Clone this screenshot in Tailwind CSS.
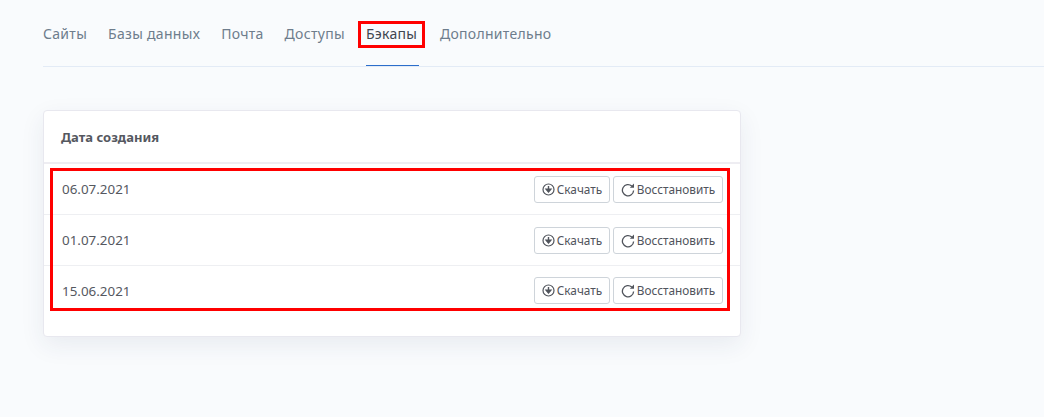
<!doctype html>
<html lang="ru"><head><meta charset="utf-8"><script src="https://cdn.jsdelivr.net/npm/@tailwindcss/browser@4"></script></head>
<body class="bg-[#f9fbfd] font-['Noto_Sans',sans-serif]">
<div class="relative h-[417px] w-[1044px] overflow-hidden pl-[43px]">
  <nav class="flex h-[67px] gap-[21px] border-b border-[#e3ebf6] pt-[23px] text-[14px] leading-[21px] tracking-[0.3px] text-[#6e7d8c]">
    <a>Сайты</a><a>Базы данных</a><a>Почта</a><a>Доступы</a>
    <a class="h-[43px] w-[53px] border-b border-[#2c6ecb] text-[#3f4650]">Бэкапы</a>
    <a>Дополнительно</a>
  </nav>
  <section class="mt-[43px] h-[227px] w-[698px] rounded-[4px] border border-[#e8e8ef] bg-white shadow-[0_8px_24px_rgba(40,50,90,0.08)]">
    <h2 class="flex h-[53px] items-center border-b-2 border-[#eeedf2] pl-[17px] pt-[2px] text-[13px] font-bold text-[#55585f]">Дата создания</h2>
    <div class="flex h-[51px] items-center justify-between border-b border-[#eeeff2] pr-[17px] pl-[18px] pt-[1px] text-[13.4px] text-[#55585f]">
      <span>06.07.2021</span>
      <div class="flex gap-[3px] text-[11.8px] text-[#50545c]">
        <button class="flex h-[27px] w-[76px] items-center justify-center gap-[2px] rounded-[3px] border border-[#ced4da]"><svg width="13" height="13" viewBox="0 0 13 13" fill="none" stroke="#50545c"><circle cx="6.5" cy="6.5" r="5.5" stroke-width="1.2"/><path d="M6.5 3v4M4.2 6.2l2.3 2.7 2.3-2.7z" stroke-width="1.4" fill="#50545c"/></svg>Скачать</button>
        <button class="flex h-[27px] w-[110px] items-center justify-center gap-[2px] rounded-[3px] border border-[#ced4da]"><svg width="14" height="14" viewBox="0 0 14 14" fill="none" stroke="#50545c"><path d="M12.6 7.5a5.6 5.6 0 1 1-1.8-4.4" stroke-width="1.3"/><path d="M13 0.6v4.2H8.8z" fill="#50545c" stroke="none"/></svg>Восстановить</button>
      </div>
    </div>
    <div class="flex h-[51px] items-center justify-between border-b border-[#eeeff2] pr-[17px] pl-[18px] pt-[1px] text-[13.4px] text-[#55585f]">
      <span>01.07.2021</span>
      <div class="flex gap-[3px] text-[11.8px] text-[#50545c]">
        <button class="flex h-[27px] w-[76px] items-center justify-center gap-[2px] rounded-[3px] border border-[#ced4da]"><svg width="13" height="13" viewBox="0 0 13 13" fill="none" stroke="#50545c"><circle cx="6.5" cy="6.5" r="5.5" stroke-width="1.2"/><path d="M6.5 3v4M4.2 6.2l2.3 2.7 2.3-2.7z" stroke-width="1.4" fill="#50545c"/></svg>Скачать</button>
        <button class="flex h-[27px] w-[110px] items-center justify-center gap-[2px] rounded-[3px] border border-[#ced4da]"><svg width="14" height="14" viewBox="0 0 14 14" fill="none" stroke="#50545c"><path d="M12.6 7.5a5.6 5.6 0 1 1-1.8-4.4" stroke-width="1.3"/><path d="M13 0.6v4.2H8.8z" fill="#50545c" stroke="none"/></svg>Восстановить</button>
      </div>
    </div>
    <div class="flex h-[51px] items-center justify-between border-b border-transparent pr-[17px] pl-[18px] pt-[1px] text-[13.4px] text-[#55585f]">
      <span>15.06.2021</span>
      <div class="-mt-[2px] flex gap-[3px] text-[11.8px] text-[#50545c]">
        <button class="flex h-[27px] w-[76px] items-center justify-center gap-[2px] rounded-[3px] border border-[#ced4da]"><svg width="13" height="13" viewBox="0 0 13 13" fill="none" stroke="#50545c"><circle cx="6.5" cy="6.5" r="5.5" stroke-width="1.2"/><path d="M6.5 3v4M4.2 6.2l2.3 2.7 2.3-2.7z" stroke-width="1.4" fill="#50545c"/></svg>Скачать</button>
        <button class="flex h-[27px] w-[110px] items-center justify-center gap-[2px] rounded-[3px] border border-[#ced4da]"><svg width="14" height="14" viewBox="0 0 14 14" fill="none" stroke="#50545c"><path d="M12.6 7.5a5.6 5.6 0 1 1-1.8-4.4" stroke-width="1.3"/><path d="M13 0.6v4.2H8.8z" fill="#50545c" stroke="none"/></svg>Восстановить</button>
      </div>
    </div>
  </section>
  <div class="absolute left-[358px] top-[21px] h-[27px] w-[67px] border-[3px] border-[#ff0000]"></div>
  <div class="absolute left-[50px] top-[168px] h-[143px] w-[680px] border-[3px] border-[#ff0000]"></div>
</div>
</body></html>
